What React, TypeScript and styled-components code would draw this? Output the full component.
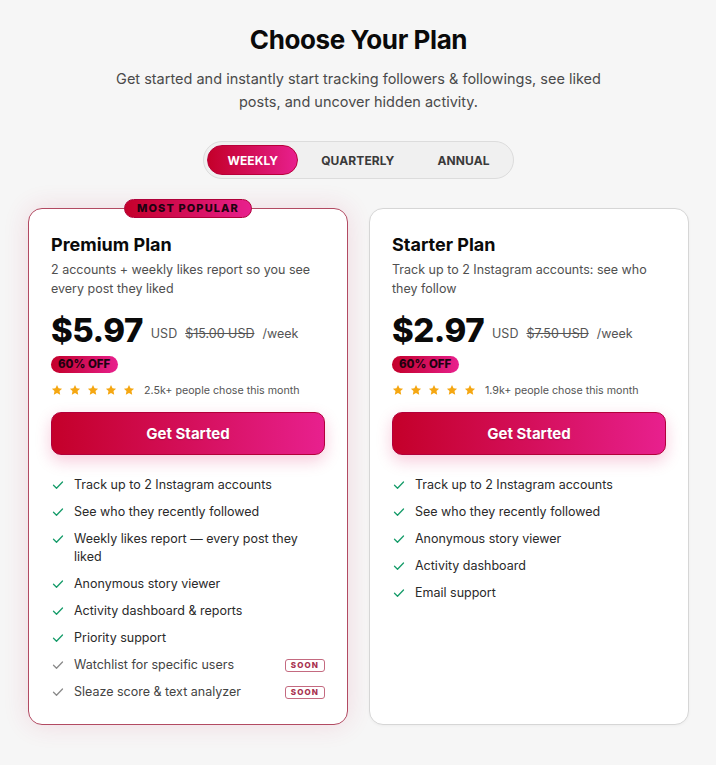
import React, { useState } from "react";
import styled, { createGlobalStyle } from "styled-components";

const GlobalStyle = createGlobalStyle`
  * { box-sizing: border-box; }
  body {
    margin: 0;
    background: #f6f6f6;
    font-family: Inter, "Noto Sans", sans-serif;
    color: #111;
  }
`;

const brandGradient = "linear-gradient(90deg, #c4002a 0%, #d40f5a 50%, #e8208e 100%)";

const Page = styled.div`
  padding: 24px 27px 40px 28px;
  display: flex;
  flex-direction: column;
  align-items: center;
`;

const Title = styled.h1`
  margin: 0;
  font-size: 26px;
  line-height: 32px;
  font-weight: 700;
  letter-spacing: -0.4px;
  color: #0a0a0a;
`;

const Subtitle = styled.p`
  margin: 11px 0 0;
  max-width: 500px;
  text-align: center;
  font-size: 14.5px;
  line-height: 23px;
  color: #4a4a4a;
`;

const Toggle = styled.div`
  margin-top: 28px;
  display: flex;
  gap: 3px;
  padding: 3px;
  border: 1px solid #dcdcdc;
  border-radius: 999px;
  background: #f0f0f0;
`;

const ToggleButton = styled.button<{ $active: boolean }>`
  height: 30px;
  padding: 0 19px;
  border: ${p => (p.$active ? "1px solid #b8003a" : "1px solid transparent")};
  border-radius: 999px;
  background: ${p => (p.$active ? brandGradient : "transparent")};
  color: ${p => (p.$active ? "#fff" : "#3a3a3a")};
  font-family: inherit;
  font-size: 12px;
  font-weight: 700;
  letter-spacing: 0.1px;
  cursor: pointer;
`;

const Grid = styled.div`
  margin-top: 29px;
  width: 100%;
  display: grid;
  grid-template-columns: 1fr 1fr;
  gap: 21px;
`;

const Card = styled.div<{ $featured?: boolean }>`
  position: relative;
  background: #fff;
  border-radius: 14px;
  border: 1px solid ${p => (p.$featured ? "#b24a62" : "#d6d6d6")};
  box-shadow: ${p =>
    p.$featured
      ? "0 0 26px rgba(210, 40, 90, 0.14)"
      : "0 1px 3px rgba(0, 0, 0, 0.04)"};
  padding: 24px 22px 23px;
  display: flex;
  flex-direction: column;
`;

const PopularBadge = styled.div`
  position: absolute;
  top: -10px;
  left: 50%;
  transform: translateX(-50%);
  height: 19px;
  padding: 0 12px;
  border-radius: 999px;
  border: 1px solid #b0003a;
  background: ${brandGradient};
  color: #1e0210;
  font-size: 11px;
  font-weight: 800;
  letter-spacing: 1.1px;
  line-height: 17px;
  white-space: nowrap;
`;

const PlanName = styled.h2`
  margin: 0;
  font-size: 18px;
  line-height: 24px;
  font-weight: 700;
  color: #0a0a0a;
`;

const PlanText = styled.p`
  margin: 3px 0 0;
  font-size: 12.5px;
  line-height: 19px;
  color: #505050;
`;

const PriceRow = styled.div`
  margin-top: 15px;
  display: flex;
  align-items: flex-end;
  gap: 8px;
`;

const Price = styled.span`
  font-size: 33px;
  line-height: 34px;
  font-weight: 800;
  letter-spacing: -0.5px;
  color: #0a0a0a;
`;

const PriceMeta = styled.span<{ $struck?: boolean }>`
  font-size: 12.5px;
  line-height: 16px;
  margin-bottom: 5px;
  color: #555;
  text-decoration: ${p => (p.$struck ? "line-through" : "none")};
`;

const OffBadge = styled.span`
  margin-top: 9px;
  align-self: flex-start;
  height: 17px;
  padding: 0 8px 0 7px;
  border-radius: 999px;
  background: ${brandGradient};
  color: #1e0210;
  font-size: 11.5px;
  font-weight: 800;
  line-height: 17px;
`;

const RatingRow = styled.div`
  margin-top: 10px;
  display: flex;
  align-items: center;
  height: 14px;
  font-size: 10.7px;
  color: #555;
`;

const Stars = styled.div`
  display: flex;
  gap: 6px;
  margin-right: 9px;
`;

const CtaButton = styled.button`
  margin-top: 15px;
  height: 43px;
  width: 100%;
  border: 1px solid #b2003a;
  border-radius: 10px;
  background: ${brandGradient};
  color: #fff;
  font-family: inherit;
  font-size: 15px;
  font-weight: 700;
  text-shadow: 0 1px 1px rgba(0, 0, 0, 0.2);
  box-shadow: 0 6px 16px rgba(220, 20, 90, 0.22);
  cursor: pointer;
`;

const Features = styled.ul`
  list-style: none;
  margin: 21px 0 0;
  padding: 0;
  display: flex;
  flex-direction: column;
  gap: 9px;
`;

const Feature = styled.li<{ $muted?: boolean }>`
  display: flex;
  align-items: flex-start;
  gap: 10px;
  font-size: 12.5px;
  line-height: 18px;
  color: ${p => (p.$muted ? "#444" : "#2a2a2a")};

  svg {
    flex: none;
    margin-top: 3px;
    margin-left: 1px;
  }
`;

const FeatureLabel = styled.span`
  flex: 1;
`;

const SoonTag = styled.span`
  flex: none;
  margin-top: 3px;
  height: 13px;
  padding: 0 5px;
  border: 1px solid #c46a80;
  border-radius: 3px;
  color: #a8304e;
  font-size: 8px;
  font-weight: 800;
  letter-spacing: 1.1px;
  line-height: 11px;
`;

const Star = () => (
  <svg width="12" height="12" viewBox="0 0 24 24">
    <path
      d="M12 1.8l3.1 6.6 7.1.9-5.2 4.9 1.4 7.1L12 17.8l-6.4 3.5L7 14.2 1.8 9.3l7.1-.9z"
      fill="#f5a712"
    />
  </svg>
);

const Check = ({ muted }: { muted?: boolean }) => (
  <svg width="12" height="12" viewBox="0 0 24 24" fill="none">
    <path
      d="M3 12.5l6 6L21 6"
      stroke={muted ? "#8a8a8a" : "#169c6a"}
      strokeWidth="2.6"
      strokeLinecap="round"
      strokeLinejoin="round"
    />
  </svg>
);

type Feat = { label: string; soon?: boolean };

type Plan = {
  name: string;
  text: string;
  price: string;
  oldPrice: string;
  chose: string;
  featured?: boolean;
  features: Feat[];
};

const plans: Plan[] = [
  {
    name: "Premium Plan",
    text: "2 accounts + weekly likes report so you see every post they liked",
    price: "$5.97",
    oldPrice: "$15.00 USD",
    chose: "2.5k+ people chose this month",
    featured: true,
    features: [
      { label: "Track up to 2 Instagram accounts" },
      { label: "See who they recently followed" },
      { label: "Weekly likes report — every post they liked" },
      { label: "Anonymous story viewer" },
      { label: "Activity dashboard & reports" },
      { label: "Priority support" },
      { label: "Watchlist for specific users", soon: true },
      { label: "Sleaze score & text analyzer", soon: true },
    ],
  },
  {
    name: "Starter Plan",
    text: "Track up to 2 Instagram accounts: see who they follow",
    price: "$2.97",
    oldPrice: "$7.50 USD",
    chose: "1.9k+ people chose this month",
    features: [
      { label: "Track up to 2 Instagram accounts" },
      { label: "See who they recently followed" },
      { label: "Anonymous story viewer" },
      { label: "Activity dashboard" },
      { label: "Email support" },
    ],
  },
];

const periods = ["WEEKLY", "QUARTERLY", "ANNUAL"];

const PlanCard = ({ plan }: { plan: Plan }) => (
  <Card $featured={plan.featured}>
    {plan.featured && <PopularBadge>MOST POPULAR</PopularBadge>}
    <PlanName>{plan.name}</PlanName>
    <PlanText>{plan.text}</PlanText>
    <PriceRow>
      <Price>{plan.price}</Price>
      <PriceMeta>USD</PriceMeta>
      <PriceMeta $struck>{plan.oldPrice}</PriceMeta>
      <PriceMeta>/week</PriceMeta>
    </PriceRow>
    <OffBadge>60% OFF</OffBadge>
    <RatingRow>
      <Stars>
        {[0, 1, 2, 3, 4].map(i => (
          <Star key={i} />
        ))}
      </Stars>
      {plan.chose}
    </RatingRow>
    <CtaButton>Get Started</CtaButton>
    <Features>
      {plan.features.map(f => (
        <Feature key={f.label} $muted={f.soon}>
          <Check muted={f.soon} />
          <FeatureLabel>{f.label}</FeatureLabel>
          {f.soon && <SoonTag>SOON</SoonTag>}
        </Feature>
      ))}
    </Features>
  </Card>
);

export default function App() {
  const [period, setPeriod] = useState("WEEKLY");

  return (
    <Page>
      <GlobalStyle />
      <Title>Choose Your Plan</Title>
      <Subtitle>
        Get started and instantly start tracking followers &amp; followings, see liked
        posts, and uncover hidden activity.
      </Subtitle>
      <Toggle>
        {periods.map(p => (
          <ToggleButton key={p} $active={p === period} onClick={() => setPeriod(p)}>
            {p}
          </ToggleButton>
        ))}
      </Toggle>
      <Grid>
        {plans.map(plan => (
          <PlanCard key={plan.name} plan={plan} />
        ))}
      </Grid>
    </Page>
  );
}
